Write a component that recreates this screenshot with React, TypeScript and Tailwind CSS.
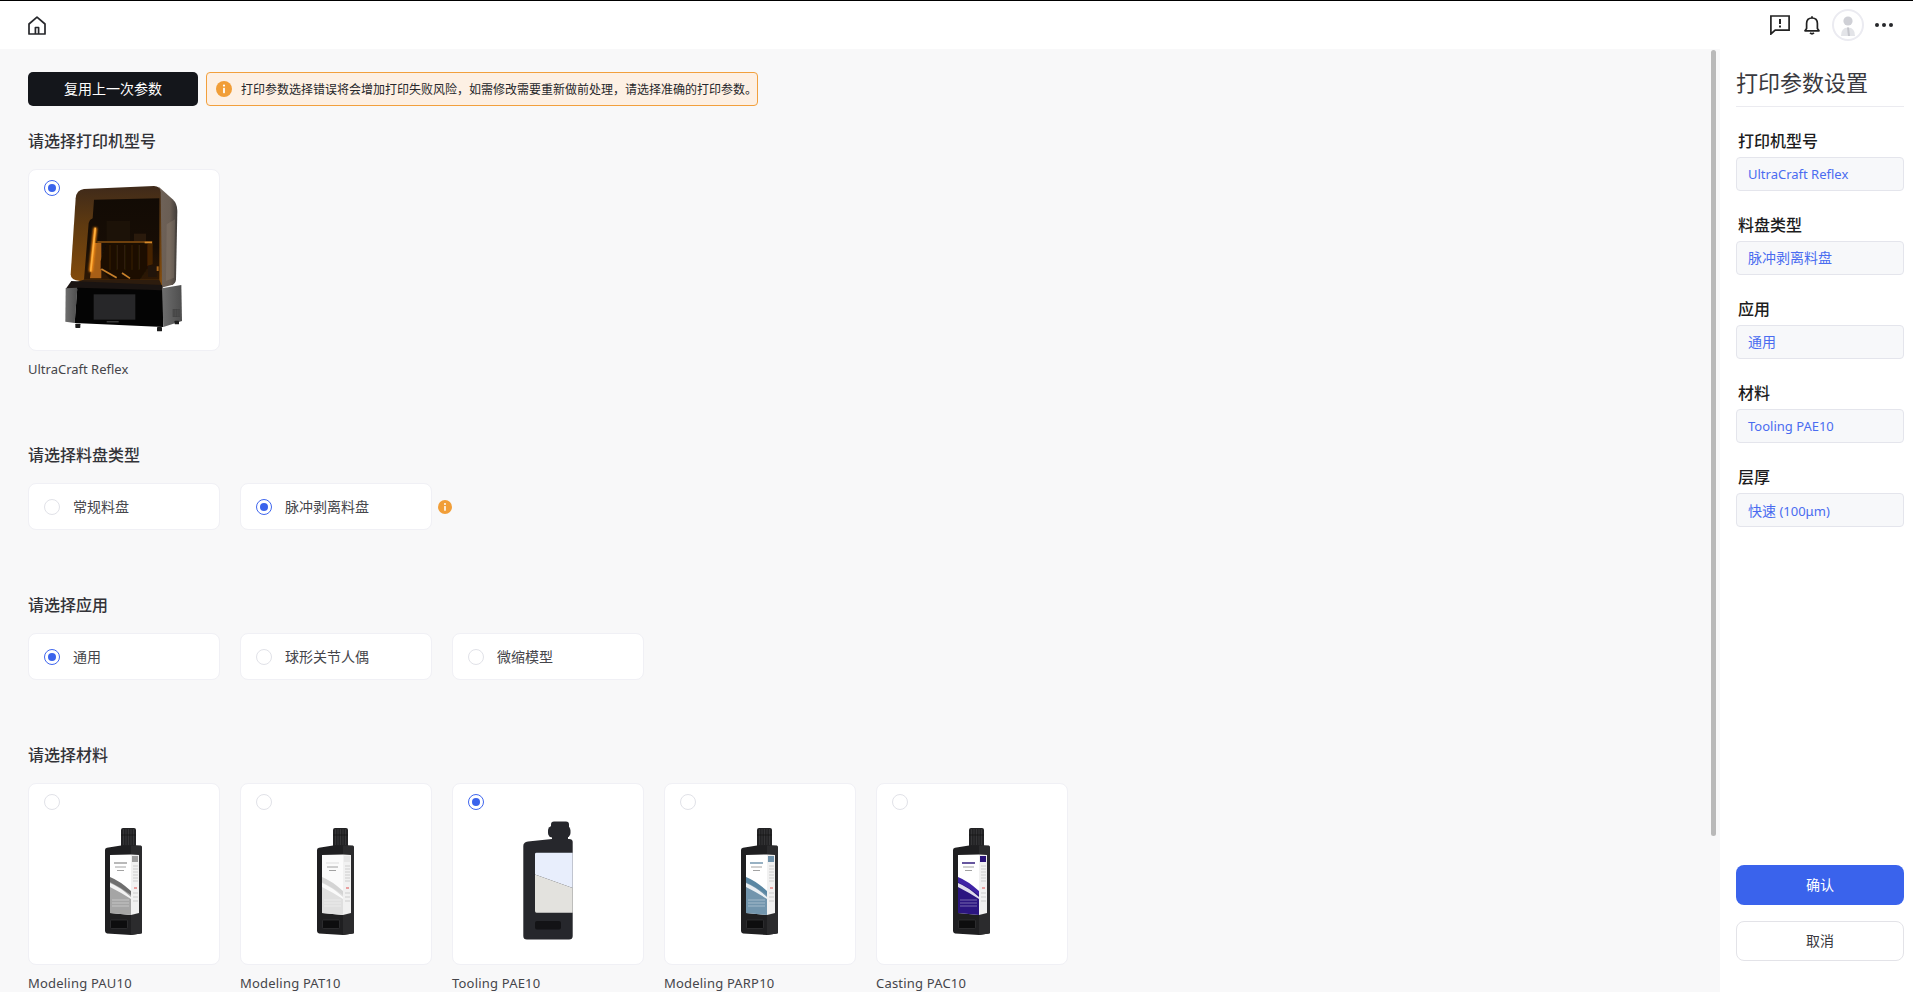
import { useId, type ReactNode } from 'react'

const font = { fontFamily: '"Noto Sans", "Noto Sans CJK SC", sans-serif' }

function Radio({ checked }: { checked?: boolean }) {
  return checked ? (
    <span className="flex h-4 w-4 shrink-0 items-center justify-center rounded-full border-[1.5px] border-[#3f66ee] bg-white">
      <span className="h-2 w-2 rounded-full bg-[#3a63ec]" />
    </span>
  ) : (
    <span className="h-4 w-4 shrink-0 rounded-full border border-[#e1e2e8] bg-white" />
  )
}

function InfoDot({ size }: { size: number }) {
  return (
    <svg width={size} height={size} viewBox="0 0 16 16" className="shrink-0">
      <circle cx="8" cy="8" r="8" fill="#f19e38" />
      <circle cx="8" cy="4.6" r="1.1" fill="#fff" />
      <rect x="7.1" y="6.8" width="1.8" height="5.4" rx="0.6" fill="#fff" />
    </svg>
  )
}

function Printer() {
  const id = useId()
  return (
    <svg width="130" height="155" viewBox="0 0 390 465">
      <defs>
        <linearGradient id={`${id}f`} x1="0" y1="0" x2="0" y2="1">
          <stop offset="0" stopColor="#3f2a1a" />
          <stop offset="0.4" stopColor="#5f3a10" />
          <stop offset="1" stopColor="#854c0c" />
        </linearGradient>
        <linearGradient id={`${id}s`} x1="0" y1="0" x2="1" y2="0">
          <stop offset="0" stopColor="#6f6258" />
          <stop offset="0.6" stopColor="#6a5e54" />
          <stop offset="1" stopColor="#3f3b38" />
        </linearGradient>
        <linearGradient id={`${id}i`} x1="0" y1="0" x2="0" y2="1">
          <stop offset="0" stopColor="#120b05" />
          <stop offset="0.6" stopColor="#170d05" />
          <stop offset="1" stopColor="#2e1804" />
        </linearGradient>
        <linearGradient id={`${id}b`} x1="0" y1="0" x2="1" y2="0">
          <stop offset="0" stopColor="#6e6e6e" />
          <stop offset="1" stopColor="#4e4e4e" />
        </linearGradient>
        <filter id={`${id}g`} x="-100%" y="-20%" width="300%" height="140%">
          <feGaussianBlur stdDeviation="3.5" />
        </filter>
        <filter id={`${id}h`} x="-20%" y="-20%" width="140%" height="140%">
          <feGaussianBlur stdDeviation="1.6" />
        </filter>
      </defs>
      {/* side panel */}
      <path d="M296 17 L338 55 Q352 68 352 90 L348 296 Q347 308 335 312 L304 320 Z" fill={`url(#${id}s)`} />
      <path d="M320 130 L345 115 L342 290 L318 300 Z" fill="#8f8072" opacity="0.35" />
      {/* hood front */}
      <path d="M72 24 L282 15 Q300 15 302 34 L306 312 L60 300 Q32 298 32 280 L47 52 Q49 27 72 24 Z" fill={`url(#${id}f)`} />
      {/* chamber */}
      <path d="M102 56 L298 52 L298 296 L72 296 L86 126 Q88 116 98 112 Z" fill={`url(#${id}i)`} />
      {/* glow from the left strip */}
      <path d="M110 186 L124 186 L124 292 L90 292 L102 186 Z" fill="#a85e14" filter={`url(#${id}h)`} />
      <path d="M240 196 L278 186 L278 250 L240 262 Z" fill="#4c2806" opacity="0.9" filter={`url(#${id}h)`} />
      {/* build plate and part */}
      <rect x="112" y="180" width="165" height="6" fill="#6e400f" filter={`url(#${id}h)`} />
      <rect x="140" y="120" width="70" height="60" fill="#1c1208" />
      <rect x="222" y="158" width="36" height="22" fill="#2a1a0c" />
      <g filter={`url(#${id}h)`}>
        <path d="M140 187 H262 V262 L240 295 H150 L122 262 V240 Z" fill="#1b0f06" />
        {[150, 172, 194, 216, 238].map((x) => (
          <path key={x} d="M0 0 V74" transform={`translate(${x} 192)`} stroke="#2e1b07" strokeWidth="5" />
        ))}
        <path d="M124 264 L170 290 M186 276 L210 292" stroke="#c9802a" strokeWidth="5" />
      </g>
      <rect x="254" y="182" width="22" height="5" fill="#d88a2c" filter={`url(#${id}h)`} />
      <rect x="264" y="254" width="26" height="34" fill="#21140a" />
      <rect x="290" y="256" width="6" height="14" fill="#a8661c" />
      {/* led strip */}
      <path d="M106 140 L92 272" stroke="#ff8f14" strokeWidth="11" filter={`url(#${id}g)`} />
      <path d="M106 140 L92 272" stroke="#ffb03c" strokeWidth="5" filter={`url(#${id}h)`} />
      <path d="M70 296 L298 296 L306 316 L48 304 Z" fill="#2d1c0e" />
      {/* base */}
      <path d="M34 300 L306 312 L310 330 L17 324 Z" fill="#1a1412" />
      <path d="M17 322 L52 320 L44 426 L16 422 Z" fill={`url(#${id}b)`} />
      <path d="M52 320 L310 328 L310 438 L44 426 Z" fill="#040404" />
      <path d="M306 322 L364 312 L366 420 L310 438 Z" fill={`url(#${id}b)`} />
      <rect x="101" y="340" width="125" height="76" fill="#272729" />
      <rect x="338" y="384" width="22" height="24" fill="#454545" />
      <path d="M342 386 V406 M347 386 V406 M352 386 V406 M357 386 V406" stroke="#626262" strokeWidth="1" />
      <rect x="140" y="421" width="36" height="3" fill="#555" />
      <rect x="46" y="428" width="15" height="13" rx="2" fill="#1c1c1c" />
      <rect x="291" y="438" width="15" height="13" rx="2" fill="#1c1c1c" />
      <rect x="344" y="419" width="13" height="11" rx="2" fill="#1c1c1c" />
    </svg>
  )
}

type Resin = {
  name: string
  accent: string
  lower: string
  swoosh: string
  upper: string
  flat?: boolean
  checked?: boolean
}

const resins: Resin[] = [
  { name: 'Modeling PAU10', accent: '#9d9d9d', lower: '#a5a5a5', swoosh: '#6e6e6e', upper: '#ffffff' },
  { name: 'Modeling PAT10', accent: '#e6e6e6', lower: '#dfdfdf', swoosh: '#d4d4d4', upper: '#fbfbfb' },
  { name: 'Tooling PAE10', accent: '', lower: '', swoosh: '', upper: '', flat: true, checked: true },
  { name: 'Modeling PARP10', accent: '#6f92ab', lower: '#7295ad', swoosh: '#5a87a3', upper: '#ffffff' },
  { name: 'Casting PAC10', accent: '#2a1378', lower: '#2b1580', swoosh: '#3f23a5', upper: '#ffffff' },
]

function FlatBottle() {
  return (
    <svg width="80" height="135" viewBox="0 0 80 135" className="ml-1 mt-2">
      <rect x="41" y="10.5" width="18" height="9" rx="3" fill="#26272c" />
      <rect x="38" y="15" width="22.5" height="11.5" rx="4.5" fill="#26272c" />
      <rect x="42" y="24" width="16" height="7" fill="#26272c" />
      <path d="M13.3 35 Q13.3 31 18 30.5 L42 28 H59 Q62.7 28 62.7 31 V125 Q62.7 128.5 59 128.5 H17 Q13.3 128.5 13.3 125 Z" fill="#26272c" />
      <path d="M25 43 Q25 41.7 26.5 41.7 H62.7 V77 L25 63.5 Z" fill="#e8eefc" />
      <path d="M25 63.5 L62.7 77 V101.7 H26.5 Q25 101.7 25 100 Z" fill="#e3e2de" />
      <rect x="25" y="110" width="26" height="8.5" rx="2" fill="#131316" />
    </svg>
  )
}

function Bottle({ r }: { r: Resin }) {
  return (
    <svg width="60" height="120" viewBox="0 0 60 120" className="mt-[13px]">
      <path d="M27 9 Q27 7 29 7 H40 Q42 7 42 9 V25 H27 Z" fill="#222224" />
      <path d="M29.5 8 V24 M32 8 V24 M34.5 8 V24 M37 8 V24 M39.5 8 V24" stroke="#3d3d40" strokeWidth="0.7" />
      <path d="M27 14 H42" stroke="#111" strokeWidth="0.7" />
      <path d="M13 26.8 L27 24.5 H42 L47 25 Q48 25.5 48 27 V111 Q48 112.5 47 112.6 L37 114 L13 112.4 Q11 112 11 110 V29 Q11 27 13 26.8 Z" fill="#1f1f21" />
      <path d="M37 24.5 H47 Q48 25 48 27 V111 Q48 112.5 47 112.6 L37 114 Z" fill="#2b2b2d" />
      {/* label */}
      <path d="M16 34 L37 33.5 V94 L16 92 Z" fill={r.upper} />
      <path d="M37 33.5 L45 34 V92 L37 94 Z" fill="#f1f1f1" />
      <path d="M16 59 L37 73 V94 L16 92 Z" fill={r.lower} />
      <path d="M16 56 Q26 60 37 70 L37 74 Q26 66 16 61 Z" fill={r.swoosh} />
      <path d="M16 62 Q26 66 37 76 L37 78 Q26 71 16 66 Z" fill="#ffffff" opacity="0.85" />
      <rect x="38" y="35" width="6" height="6" fill={r.accent} />
      <path d="M20 42 H33" stroke={r.accent} strokeWidth="1.6" opacity="0.9" />
      <path d="M21 46 H32 M23 49.5 H30" stroke="#8c8c8c" strokeWidth="0.8" />
      <path d="M39 45 H44 M39 48 H44 M39 51 H44 M39 54 H44 M39 57 H44 M39 60 H44 M39 72 H44 M39 76 H44 M39 80 H44" stroke="#bdbdbd" strokeWidth="0.7" />
      <path d="M18 79 H35 M18 82 H35 M18 85 H35" stroke="#ffffff" strokeWidth="0.6" opacity="0.6" />
      <rect x="40" y="66" width="3" height="2" fill="#e9a0a0" />
      {/* window */}
      <rect x="16.5" y="99" width="17" height="8.5" rx="1" fill="#0d0d0e" stroke="#3b3b3d" strokeWidth="0.6" />
    </svg>
  )
}

function Section({ title, children, last }: { title: string; children: ReactNode; last?: boolean }) {
  return (
    <section className={last ? '' : 'mb-[63px]'}>
      <h2 className="mb-4 text-base font-medium leading-6 text-[#333338]">{title}</h2>
      {children}
    </section>
  )
}

function OptionCard({ label, checked }: { label: string; checked?: boolean }) {
  return (
    <div className="flex h-[47px] w-[192px] items-center gap-[13px] rounded-lg border border-[#f0f0f5] bg-white pl-[15px] text-sm text-[#45454a]">
      <Radio checked={checked} />
      {label}
    </div>
  )
}

function ImageCard({
  label,
  checked,
  spaced,
  children,
}: {
  label: string
  checked?: boolean
  spaced?: boolean
  children: ReactNode
}) {
  return (
    <div className="w-[192px] pb-[3px]">
      <div className="relative flex h-[182px] items-center justify-center rounded-lg border border-[#f0f0f5] bg-white">
        <span className="absolute left-[15px] top-[10px] flex">
          <Radio checked={checked} />
        </span>
        {children}
      </div>
      <p className={`mt-[10px] text-[13px] leading-4 text-[#45454a] ${spaced ? 'tracking-[0.2px]' : ''}`}>{label}</p>
    </div>
  )
}

const settings: { label: string; value: ReactNode; latin?: boolean }[] = [
  { label: '打印机型号', value: 'UltraCraft Reflex', latin: true },
  { label: '料盘类型', value: '脉冲剥离料盘' },
  { label: '应用', value: '通用' },
  { label: '材料', value: 'Tooling PAE10', latin: true },
  {
    label: '层厚',
    value: (
      <>
        <span className="text-sm">快速</span> (100μm)
      </>
    ),
    latin: true,
  },
]

export default function App() {
  return (
    <div className="flex h-screen w-full flex-col overflow-hidden bg-white" style={font}>
      <header className="flex h-[49px] shrink-0 items-center border-t border-black bg-white pl-7 pr-5">
        <svg width="18" height="19" viewBox="0 0 18 19" fill="none" stroke="#26272b" strokeWidth="1.7" strokeLinejoin="round">
          <path d="M1 18 V8 L9 1.2 L17 8 V18 Z" />
          <path d="M7.4 18 V11.5 H10.6 V18" />
        </svg>
        <div className="ml-auto flex items-center">
          <svg width="20" height="20" viewBox="0 0 20 20" fill="none" stroke="#222" strokeWidth="1.7">
            <path d="M0.9 1 H19.1 V15.2 H5.2 L0.9 19 Z" strokeLinejoin="miter" />
            <path d="M10 4 V9" strokeWidth="2" />
            <path d="M10 10.6 V12.6" strokeWidth="2" />
          </svg>
          <svg width="16" height="19" viewBox="0 0 16 19" fill="none" stroke="#222" strokeWidth="1.7" className="ml-[14px]">
            <path d="M1 14.8 H15 L13.4 12.6 V7.6 Q13.4 2 8 2 Q2.6 2 2.6 7.6 V12.6 Z" strokeLinejoin="round" />
            <path d="M8 0.3 V2 M6 16.9 Q8 18.6 10 16.9" />
          </svg>
          <div className="ml-3 flex h-8 w-8 items-center justify-center overflow-hidden rounded-full border-2 border-[#ebebf1] bg-white">
            <svg width="24" height="24" viewBox="0 0 24 24">
              <circle cx="12" cy="8" r="4.6" fill="#cfd0d6" />
              <path d="M5 23 Q5 14.5 12 14.5 Q19 14.5 19 23 Z" fill="#e3e4e8" />
              <path d="M11 14.5 H13 L14 23 H12 Z" fill="#c5c6cc" />
            </svg>
          </div>
          <div className="ml-[11px] flex gap-[3px]">
            <span className="h-[4px] w-[4px] rounded-full bg-[#26272b]" />
            <span className="h-[4px] w-[4px] rounded-full bg-[#26272b]" />
            <span className="h-[4px] w-[4px] rounded-full bg-[#26272b]" />
          </div>
        </div>
      </header>

      <div className="flex min-h-0 flex-1">
        <main className="relative min-w-0 flex-1 overflow-hidden bg-[#f8f8f9] pl-7 pt-[23px]">
          <div className="mb-[23px] flex gap-2">
            <button type="button" className="h-[34px] w-[170px] rounded-[5px] bg-[#14161b] text-sm text-white">
              复用上一次参数
            </button>
            <div className="flex h-[34px] w-[552px] items-center gap-[9px] rounded-[4px] border border-[#f2a03d] bg-[#fdf0e4] pl-[9px] text-xs text-[#26272b]">
              <InfoDot size={16} />
              <span className="pt-0.5">打印参数选择错误将会增加打印失败风险，如需修改需要重新做前处理，请选择准确的打印参数。</span>
            </div>
          </div>

          <Section title="请选择打印机型号">
            <ImageCard label="UltraCraft Reflex" checked>
              <div className="flex pb-1 pl-[2px]">
                <Printer />
              </div>
            </ImageCard>
          </Section>

          <Section title="请选择料盘类型">
            <div className="flex items-center gap-5">
              <OptionCard label="常规料盘" />
              <OptionCard label="脉冲剥离料盘" checked />
              <span className="-ml-[14px]">
                <InfoDot size={14} />
              </span>
            </div>
          </Section>

          <Section title="请选择应用">
            <div className="flex gap-5">
              <OptionCard label="通用" checked />
              <OptionCard label="球形关节人偶" />
              <OptionCard label="微缩模型" />
            </div>
          </Section>

          <Section title="请选择材料" last>
            <div className="flex gap-5">
              {resins.map((r) => (
                <ImageCard key={r.name} label={r.name} checked={r.checked} spaced>
                  {r.flat ? <FlatBottle /> : <Bottle r={r} />}
                </ImageCard>
              ))}
            </div>
          </Section>

          <div className="absolute right-1 top-[1px] h-[786px] w-[5px] rounded-full bg-[#b9b9b9]" />
        </main>

        <aside className="flex w-[193px] shrink-0 flex-col bg-white pb-[31px] pl-4 pr-[9px] pt-[15px]">
          <h1 className="border-b border-[#ebebf0] pb-[6px] text-[22px] leading-9 text-[#3a3a40]">打印参数设置</h1>
          {settings.map((s) => (
            <div key={s.label} className="mt-[22px]">
              <div className="mb-1 pl-[2px] text-base font-medium leading-6 text-[#1c1c20]">{s.label}</div>
              <div
                className={`flex h-[34px] items-center rounded-[4px] border border-[#e4e5ec] bg-[#f7f8fa] px-[11px] text-[#4a6cf0] ${
                  s.latin ? 'pt-0.5 text-[13px]' : 'text-sm'
                }`}
              >
                <span>{s.value}</span>
              </div>
            </div>
          ))}
          <div className="mt-auto flex flex-col gap-4">
            <button type="button" className="h-10 rounded-lg bg-[#3a63ec] text-sm text-white">
              确认
            </button>
            <button type="button" className="h-10 rounded-lg border border-[#e3e3e8] bg-white text-sm text-[#3a3a40]">
              取消
            </button>
          </div>
        </aside>
      </div>
    </div>
  )
}
